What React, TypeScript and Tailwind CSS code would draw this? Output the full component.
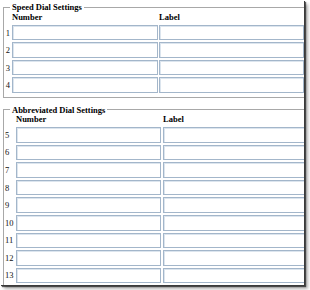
const speedRows = [1, 2, 3, 4];
const abbrRows = [5, 6, 7, 8, 9, 10, 11, 12, 13];

const Field = ({ w }: { w: string }) => (
  <input
    type="text"
    className={`${w} h-[15.6px] border border-[#a3b6ca] bg-white shadow-[inset_1px_1px_0_#dce5ee] outline-none`}
  />
);

const App = () => {
  return (
    <div
      className="w-[310px] h-[290px] bg-white text-black"
      style={{ fontFamily: '"Liberation Serif", "Times New Roman", serif' }}
    >
      <div className="w-[304px] h-[285px] overflow-hidden bg-white shadow-[1px_1px_0_#3a3a3a,2px_2px_1px_rgba(0,0,0,0.6),4px_4px_3px_rgba(0,0,0,0.3)]">
        <div className="pl-[3px] pt-[1px] w-[320px]">
          <fieldset className="border border-[#a8a8a8] pb-[4px]">
            <legend className="ml-[6px] px-[2px] text-[8.5px] leading-[12px] font-bold">
              Speed Dial Settings
            </legend>
            <div className="grid grid-cols-[7px_146px_160px] gap-x-[1px] gap-y-[1.9px] items-center">
              <div />
              <div className="text-[8.5px] leading-[11px] font-bold -mt-[1px]">Number</div>
              <div className="text-[8.5px] leading-[11px] font-bold -mt-[1px]">Label</div>
              {speedRows.map((n) => (
                <div key={n} className="contents">
                  <div className="text-[8.5px] leading-[10px] text-right pr-[1px] text-[#111]">{n}</div>
                  <Field w="w-[146px]" />
                  <Field w="w-[145px]" />
                </div>
              ))}
            </div>
          </fieldset>

          <fieldset className="border border-[#a8a8a8] mt-[6px] pb-[4px]">
            <legend className="ml-[6px] px-[2px] text-[8.5px] leading-[12px] font-bold">
              Abbreviated Dial Settings
            </legend>
            <div className="grid grid-cols-[12px_145px_160px] gap-y-[2px] items-center -mt-[2px]">
              <div />
              <div className="text-[8.5px] leading-[11px] font-bold">Number</div>
              <div className="text-[8.5px] leading-[11px] font-bold pl-[2px]">Label</div>
              {abbrRows.map((n) => (
                <div key={n} className="contents">
                  <div className="text-[8.5px] leading-[10px] pl-[1px] text-[#111]">{n}</div>
                  <Field w="w-[145px]" />
                  <Field w="w-[160px] ml-[2px]" />
                </div>
              ))}
            </div>
          </fieldset>
        </div>
      </div>
    </div>
  );
};

export default App;
